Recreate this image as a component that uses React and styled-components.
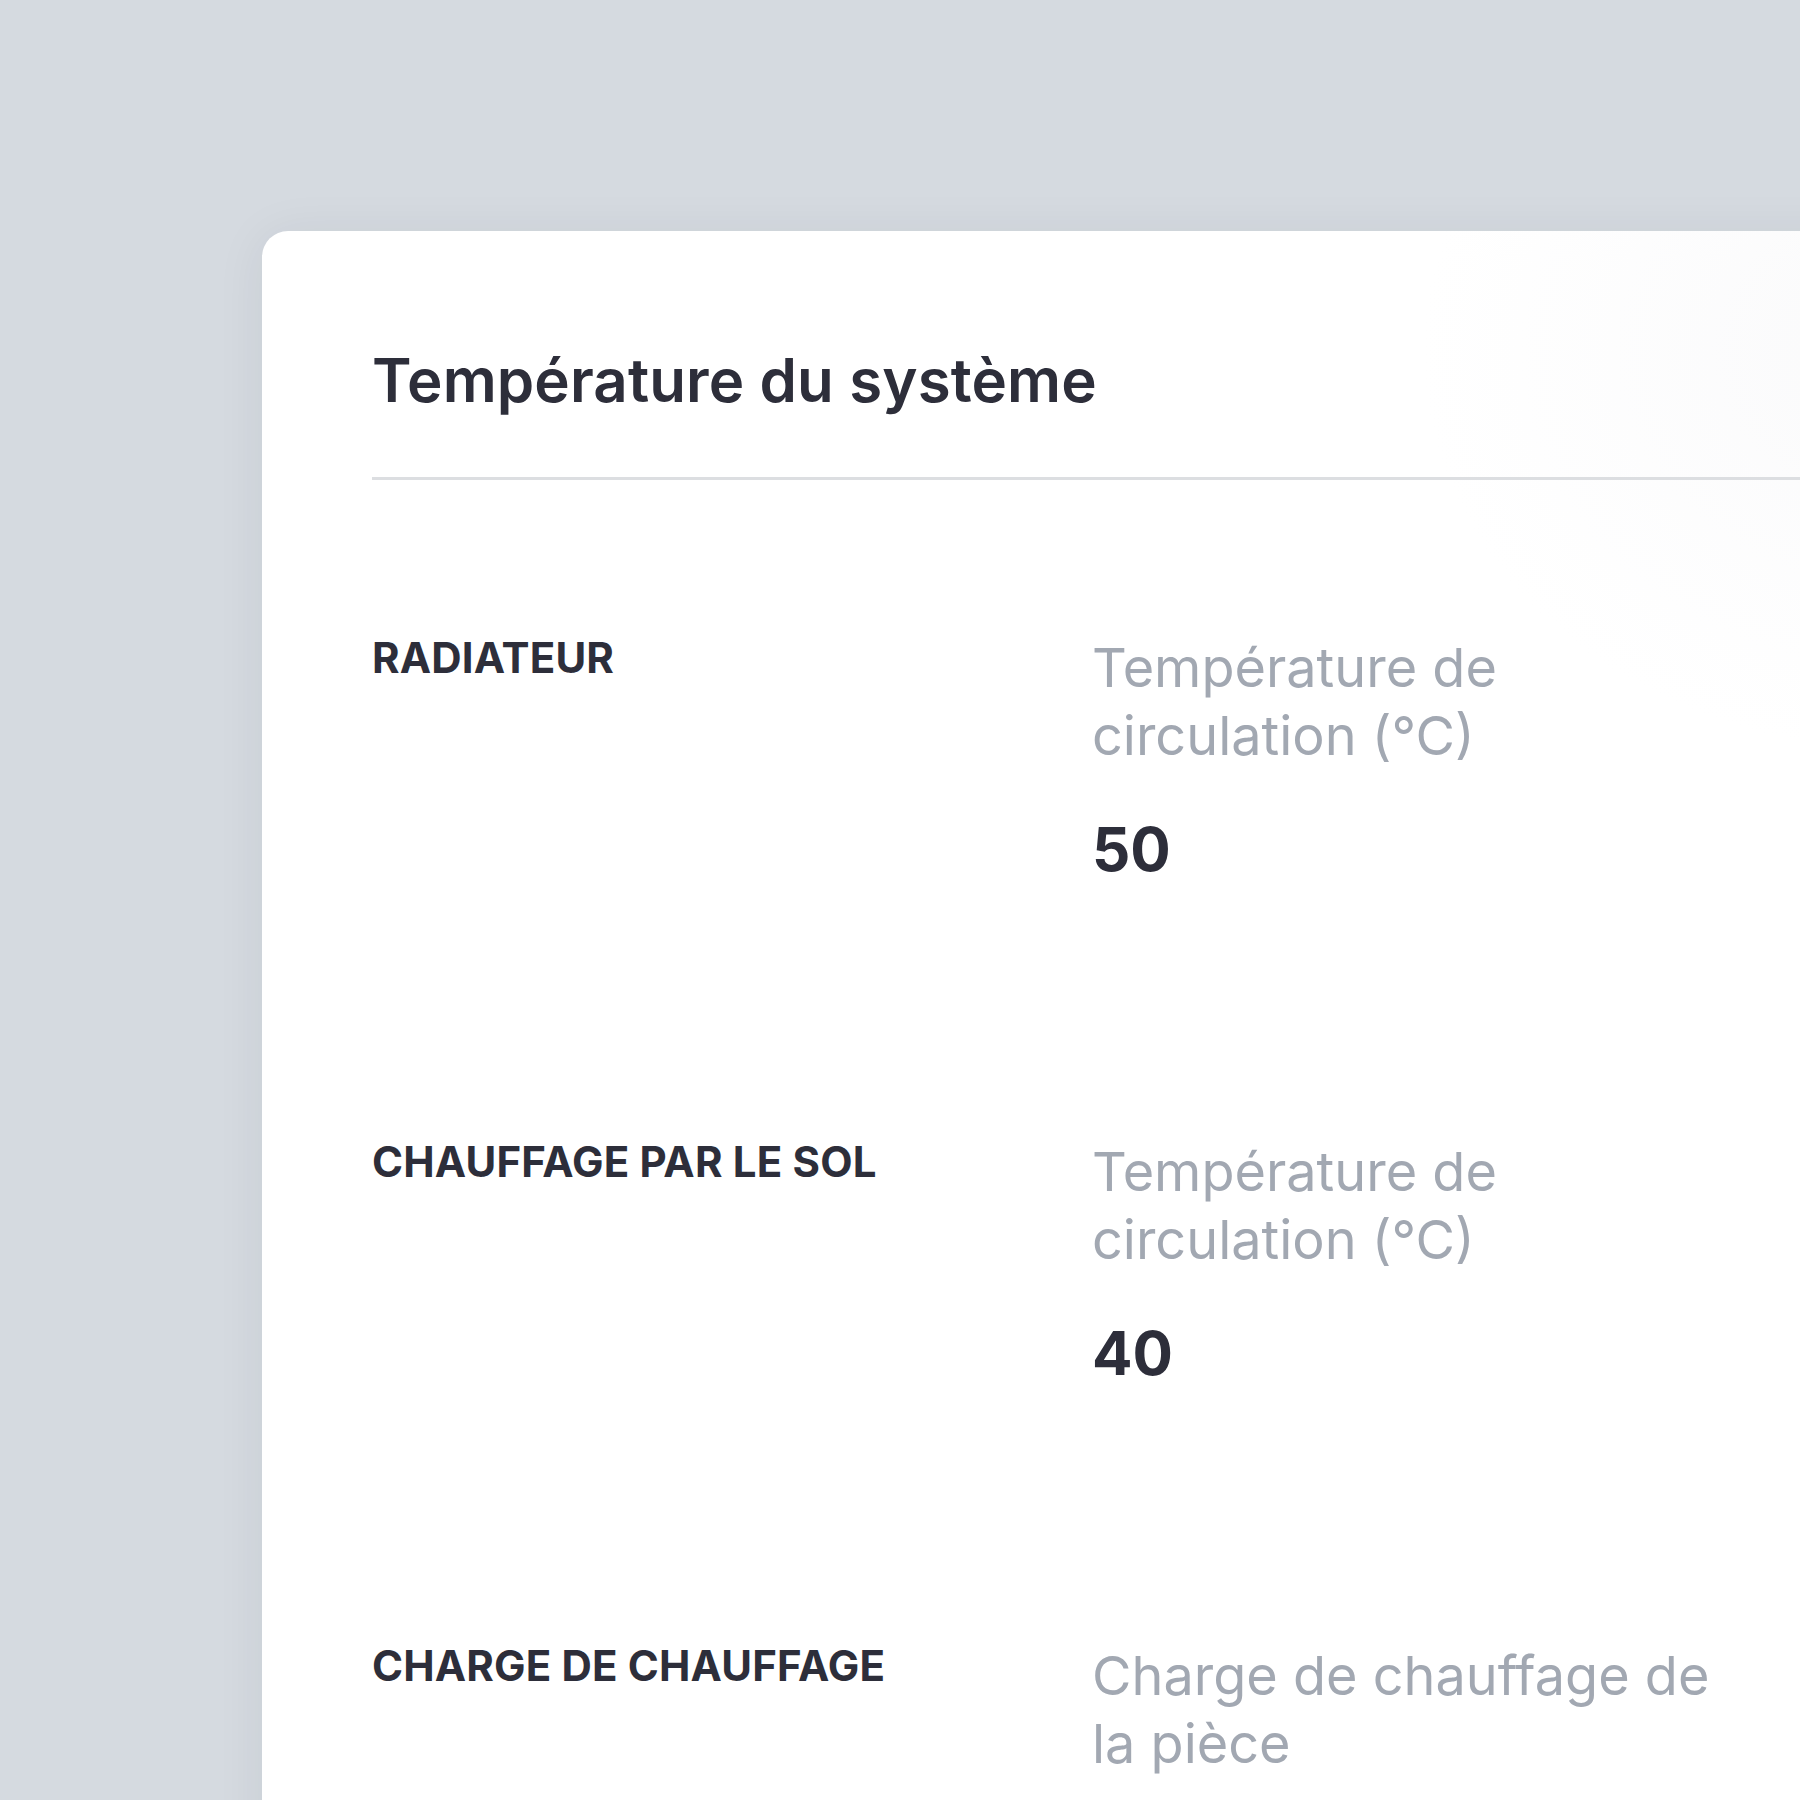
import React from 'react';
import styled, { createGlobalStyle } from 'styled-components';

const GlobalStyle = createGlobalStyle`
  html, body {
    margin: 0;
    padding: 0;
    overflow: hidden;
    background: #d5dae0;
  }
  body {
    font-family: Inter, "Noto Sans", "Liberation Sans", sans-serif;
  }
`;

const Page = styled.div`
  width: 1800px;
  height: 1800px;
  overflow: hidden;
  box-sizing: border-box;
  padding: 231px 0 0 262px;
  background: #d5dae0;
`;

const Card = styled.section`
  width: 1700px;
  min-height: 1700px;
  box-sizing: border-box;
  padding: 113px 110px 0 110px;
  background:
    radial-gradient(ellipse 480px 400px at 1640px 120px, #fafafb 0%, rgba(255, 255, 255, 0) 100%),
    #ffffff;
  border-radius: 26px;
  box-shadow: 0 4px 50px rgba(30, 40, 55, 0.07);
`;

const Header = styled.header`
  padding-bottom: 61px;
  border-bottom: 3px solid #dcdee1;
`;

const Title = styled.h1`
  margin: 0;
  font-size: 60px;
  line-height: 72px;
  font-weight: 600;
  color: #2d2e3a;
  letter-spacing: 0.002em;
`;

const List = styled.div`
  display: grid;
  row-gap: 253px;
  padding-top: 154px;
`;

const Row = styled.div`
  display: grid;
  grid-template-columns: 720px 650px;
  align-items: start;
`;

const Label = styled.h2`
  margin: 0;
  font-size: 42px;
  line-height: 48px;
  font-weight: 700;
  text-transform: uppercase;
  color: #2d2e3a;
  letter-spacing: 0.004em;
`;

const Field = styled.div`
  display: flex;
  flex-direction: column;
  gap: 43px;
`;

const Caption = styled.p`
  margin: 0;
  font-size: 54px;
  line-height: 68px;
  font-weight: 400;
  color: #a2a8b2;
`;

const Value = styled.span`
  font-size: 60px;
  line-height: 72px;
  font-weight: 700;
  color: #2d2e3a;
`;

const rows = [
  { label: 'Radiateur', caption: 'Température de circulation (°C)', value: '50' },
  { label: 'Chauffage par le sol', caption: 'Température de circulation (°C)', value: '40' },
  { label: 'Charge de chauffage', caption: 'Charge de chauffage de la pièce', value: '' },
];

export default function App() {
  return (
    <Page>
      <GlobalStyle />
      <Card>
        <Header>
          <Title>Température du système</Title>
        </Header>
        <List>
          {rows.map((row) => (
            <Row key={row.label}>
              <Label>{row.label}</Label>
              <Field>
                <Caption>{row.caption}</Caption>
                {row.value && <Value>{row.value}</Value>}
              </Field>
            </Row>
          ))}
        </List>
      </Card>
    </Page>
  );
}
